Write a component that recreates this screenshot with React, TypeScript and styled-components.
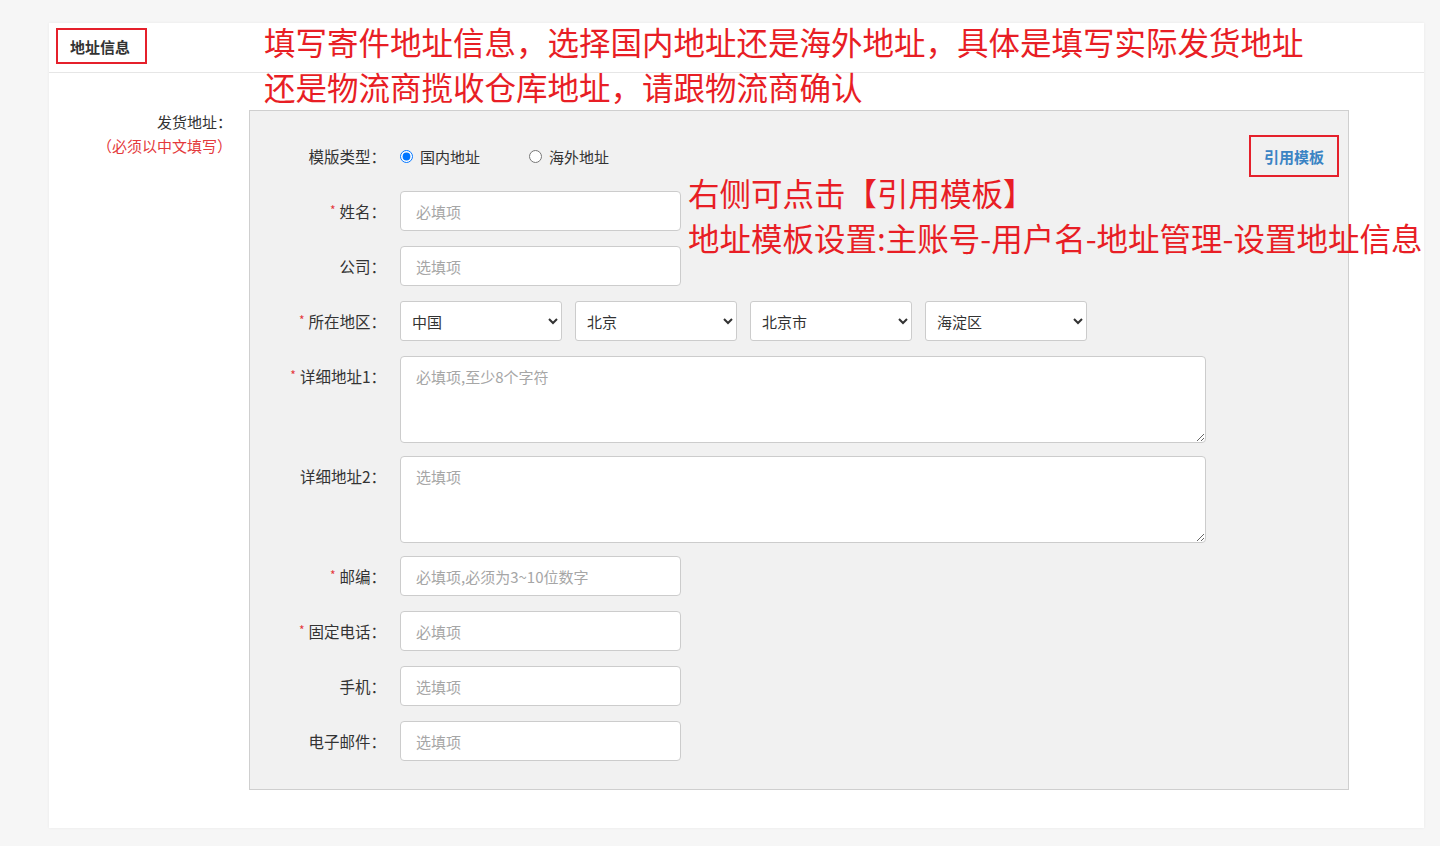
import React from 'react'
import styled, { createGlobalStyle } from 'styled-components'

const GlobalStyle = createGlobalStyle`
  html, body {
    margin: 0;
    padding: 0;
    background: #f6f6f6;
    font-family: "Noto Sans CJK SC", "Noto Sans", sans-serif;
    color: #333;
  }
`

const Page = styled.div`
  padding: 23px 16px 19px 49px;
`

const Card = styled.div`
  position: relative;
  width: 1375px;
  background: #fff;
  box-shadow: 0 0 3px rgba(0, 0, 0, 0.06);
`

const CardHeader = styled.div`
  height: 50px;
  border-bottom: 1px solid #e6e6e6;
  padding: 5px 0 0 7px;
  box-sizing: border-box;
`

const TitleBox = styled.div`
  width: 91px;
  height: 36px;
  box-sizing: border-box;
  border: 2px solid #e5202b;
  display: flex;
  align-items: center;
  padding-left: 12px;
  font-size: 15px;
  font-weight: bold;
  color: #333;
`

const CardBody = styled.div`
  display: flex;
  gap: 17px;
  padding: 37px 75px 38px 0;
`

const SideLabel = styled.div`
  width: 183px;
  flex-shrink: 0;
  text-align: right;
  font-size: 15px;
  line-height: 24px;
`

const SideNote = styled.div`
  color: #e4393c;
  font-size: 15px;
`

const Panel = styled.div`
  flex: 1;
  background: #f1f1f1;
  border: 1px solid #cfcfcf;
  padding: 24px 9px 28px 0;
`

const Row = styled.div<{ $top?: boolean; $mb?: number }>`
  display: flex;
  align-items: ${({ $top }) => ($top ? 'flex-start' : 'center')};
  margin-bottom: ${({ $mb }) => ($mb === undefined ? 15 : $mb)}px;
  &:last-child {
    margin-bottom: 0;
  }
`

const Label = styled.div`
  width: 136px;
  height: 40px;
  flex-shrink: 0;
  text-align: right;
  padding-right: 14px;
  font-size: 15.5px;
  line-height: 40px;
  color: #333;
`

const Star = styled.span`
  color: #e4393c;
  font-size: 12px;
  line-height: 0;
  margin-right: 4px;
  position: relative;
  top: -3px;
`

const RadioGroup = styled.div`
  display: flex;
  align-items: center;
`

const RadioItem = styled.label`
  display: flex;
  align-items: center;
  font-size: 15px;
  color: #333;
  margin-right: 49px;
  input {
    width: 13px;
    height: 13px;
    margin: 0 7px 0 0;
  }
`

const TemplateButton = styled.button`
  margin-left: auto;
  width: 90px;
  height: 42px;
  border: 2px solid #e5202b;
  background: transparent;
  color: #3b84c4;
  font-family: inherit;
  font-size: 15px;
  font-weight: bold;
  padding: 0;
`

const TextInput = styled.input`
  width: 281px;
  height: 40px;
  box-sizing: border-box;
  border: 1px solid #ccc;
  border-radius: 4px;
  background: #fff;
  padding: 0 15px;
  font-family: inherit;
  font-size: 15px;
  color: #333;
  outline: none;
  &::placeholder {
    color: #a6a6a6;
  }
`

const TextArea = styled.textarea`
  width: 806px;
  height: 87px;
  box-sizing: border-box;
  border: 1px solid #ccc;
  border-radius: 4px;
  background: #fff;
  padding: 9px 15px;
  font-family: inherit;
  font-size: 15px;
  color: #333;
  outline: none;
  display: block;
  &::placeholder {
    color: #a6a6a6;
  }
`

const Selects = styled.div`
  display: flex;
  gap: 13px;
`

const Select = styled.select`
  width: 162px;
  height: 40px;
  border: 1px solid #ccc;
  border-radius: 3px;
  background: #fff;
  padding: 0 7px 0 7px;
  font-family: inherit;
  font-size: 15px;
  color: #333;
`

const Note = styled.div<{ $left: number; $top: number }>`
  position: absolute;
  left: ${({ $left }) => $left}px;
  top: ${({ $top }) => $top}px;
  color: #e81e25;
  font-size: 31.5px;
  line-height: 45px;
  white-space: nowrap;
  pointer-events: none;
`

const fields: { label: string; required?: boolean; placeholder: string }[] = [
  { label: '邮编：', required: true, placeholder: '必填项,必须为3~10位数字' },
  { label: '固定电话：', required: true, placeholder: '必填项' },
  { label: '手机：', placeholder: '选填项' },
  { label: '电子邮件：', placeholder: '选填项' },
]

export default function App() {
  return (
    <>
      <GlobalStyle />
      <Page>
        <Card>
          <CardHeader>
            <TitleBox>地址信息</TitleBox>
          </CardHeader>

          <CardBody>
            <SideLabel>
              <div>发货地址：</div>
              <SideNote>（必须以中文填写）</SideNote>
            </SideLabel>

            <Panel>
              <Row $mb={14}>
                <Label>模版类型：</Label>
                <RadioGroup>
                  <RadioItem>
                    <input type="radio" name="tpl" defaultChecked />
                    国内地址
                  </RadioItem>
                  <RadioItem>
                    <input type="radio" name="tpl" />
                    海外地址
                  </RadioItem>
                </RadioGroup>
                <TemplateButton>引用模板</TemplateButton>
              </Row>

              <Row>
                <Label><Star>*</Star>姓名：</Label>
                <TextInput placeholder="必填项" />
              </Row>

              <Row>
                <Label>公司：</Label>
                <TextInput placeholder="选填项" />
              </Row>

              <Row>
                <Label><Star>*</Star>所在地区：</Label>
                <Selects>
                  <Select defaultValue="中国"><option>中国</option></Select>
                  <Select defaultValue="北京"><option>北京</option></Select>
                  <Select defaultValue="北京市"><option>北京市</option></Select>
                  <Select defaultValue="海淀区"><option>海淀区</option></Select>
                </Selects>
              </Row>

              <Row $top $mb={13}>
                <Label><Star>*</Star>详细地址1：</Label>
                <TextArea placeholder="必填项,至少8个字符" />
              </Row>

              <Row $top $mb={13}>
                <Label>详细地址2：</Label>
                <TextArea placeholder="选填项" />
              </Row>

              {fields.map(f => (
                <Row key={f.label}>
                  <Label>
                    {f.required && <Star>*</Star>}
                    {f.label}
                  </Label>
                  <TextInput placeholder={f.placeholder} />
                </Row>
              ))}
            </Panel>
          </CardBody>

          <Note $left={215} $top={-4}>
            填写寄件地址信息，选择国内地址还是海外地址，具体是填写实际发货地址
            <br />
            还是物流商揽收仓库地址，请跟物流商确认
          </Note>
          <Note $left={639} $top={147}>
            右侧可点击【引用模板】
            <br />
            地址模板设置:主账号-用户名-地址管理-设置地址信息
          </Note>
        </Card>
      </Page>
    </>
  )
}
